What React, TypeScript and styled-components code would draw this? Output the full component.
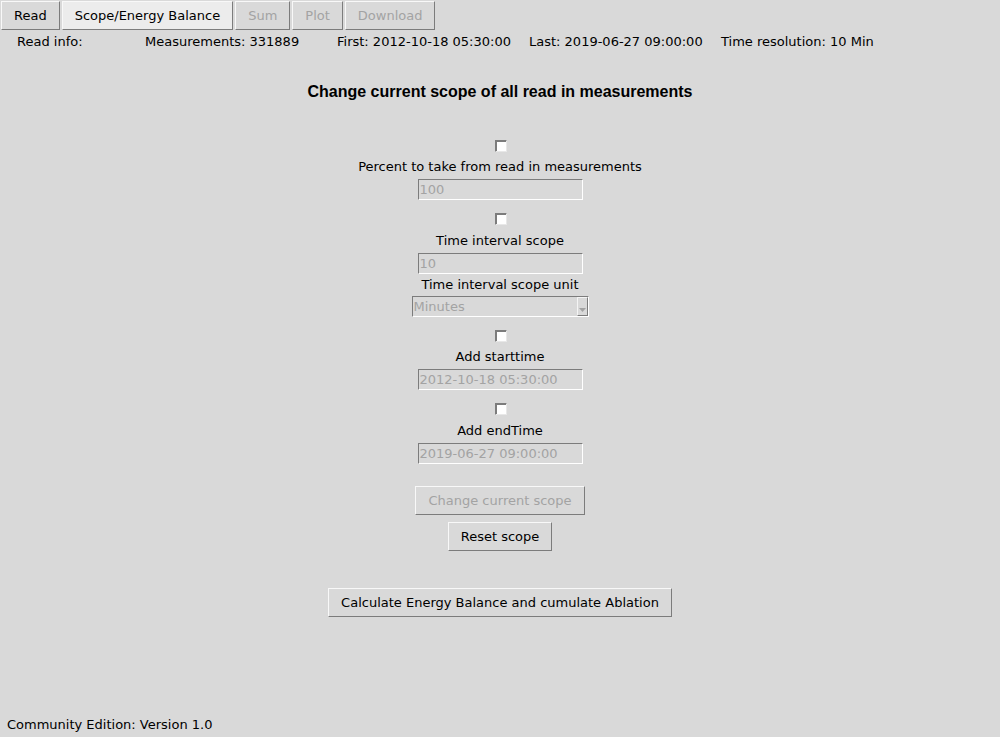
import React from "react";
import styled, { createGlobalStyle } from "styled-components";

const Global = createGlobalStyle`
  html, body { margin: 0; padding: 0; background: #d9d9d9; }
  body { font-family: "DejaVu Sans", sans-serif; font-size: 13px; color: #000; }
`;

const Page = styled.div`
  height: 737px;
  display: flex;
  flex-direction: column;
  background: #d9d9d9;
  overflow: hidden;
`;

const TabBar = styled.div`
  display: flex;
  padding: 1px;
  gap: 2px;
  height: 29px;
`;

const RaisedButton = styled.button<{ $disabled?: boolean; $active?: boolean }>`
  height: 29px;
  padding: 0 12px;
  margin: 0;
  font-family: "DejaVu Sans", sans-serif;
  font-size: 13px;
  line-height: 27px;
  color: ${(p) => (p.$disabled ? "#a3a3a3" : "#000")};
  background: ${(p) => (p.$active ? "#ececec" : "#d9d9d9")};
  border: 1px solid;
  border-color: #f8f8f8 #7c7c7c #7c7c7c #f8f8f8;
  white-space: nowrap;
  cursor: default;
`;

const InfoRow = styled.div`
  display: grid;
  grid-template-columns: 128px 192px 192px 192px auto;
  padding-left: 17px;
  margin-top: 2px;
  line-height: 18px;
  white-space: nowrap;
`;

const Main = styled.div`
  display: flex;
  flex-direction: column;
  align-items: center;
`;

const Title = styled.div`
  margin-top: 31px;
  font-family: "Liberation Sans", Arial, sans-serif;
  font-weight: bold;
  font-size: 16px;
  line-height: 20px;
`;

const Check = styled.span<{ $mt: number }>`
  display: block;
  margin-top: ${(p) => p.$mt}px;
  margin-left: 2px;
  width: 10px;
  height: 10px;
  background: #fff;
  border-style: solid;
  border-width: 1px;
  border-color: #7c7c7c #e8e8e8 #e8e8e8 #7c7c7c;
  box-shadow: inset 1px 1px 0 #7c7c7c;
`;

const Label = styled.div<{ $mt: number }>`
  margin-top: ${(p) => p.$mt}px;
  line-height: 18px;
  white-space: nowrap;
`;

const Entry = styled.div<{ $mt: number }>`
  margin-top: ${(p) => p.$mt}px;
  width: 162px;
  height: 19px;
  border: 1px solid;
  border-color: #7c7c7c #fff #fff #7c7c7c;
  color: #a3a3a3;
  line-height: 19px;
  padding-left: 1px;
  box-sizing: content-box;
  white-space: nowrap;
  overflow: hidden;
`;

const Combo = styled.div<{ $mt: number }>`
  margin-top: ${(p) => p.$mt}px;
  width: 175px;
  height: 19px;
  border: 1px solid;
  border-color: #7c7c7c #fff #fff #7c7c7c;
  display: flex;
  align-items: stretch;
  color: #a3a3a3;
`;

const ComboText = styled.div`
  flex: 1;
  line-height: 19px;
  padding-left: 1px;
`;

const ComboArrow = styled.div`
  width: 11px;
  border: 1px solid;
  border-color: #f4f4f4 #7c7c7c #7c7c7c #f4f4f4;
  display: flex;
  align-items: flex-end;
  justify-content: center;
  padding-bottom: 3px;
  box-sizing: border-box;
`;

const Btn = styled(RaisedButton)<{ $mt: number }>`
  margin-top: ${(p) => p.$mt}px;
`;

const Footer = styled.div`
  margin-top: auto;
  padding: 0 0 3px 7px;
  line-height: 18px;
`;

export default function App() {
  return (
    <Page>
      <Global />
      <TabBar>
        <RaisedButton>Read</RaisedButton>
        <RaisedButton $active>Scope/Energy Balance</RaisedButton>
        <RaisedButton $disabled>Sum</RaisedButton>
        <RaisedButton $disabled>Plot</RaisedButton>
        <RaisedButton $disabled>Download</RaisedButton>
      </TabBar>
      <InfoRow>
        <span>Read info:</span>
        <span>Measurements: 331889</span>
        <span>First: 2012-10-18 05:30:00</span>
        <span>Last: 2019-06-27 09:00:00</span>
        <span>Time resolution: 10 Min</span>
      </InfoRow>
      <Main>
        <Title>Change current scope of all read in measurements</Title>
        <Check $mt={38} />
        <Label $mt={6}>Percent to take from read in measurements</Label>
        <Entry $mt={3}>100</Entry>
        <Check $mt={13} />
        <Label $mt={7}>Time interval scope</Label>
        <Entry $mt={3}>10</Entry>
        <Label $mt={2}>Time interval scope unit</Label>
        <Combo $mt={2}>
          <ComboText>Minutes</ComboText>
          <ComboArrow>
            <svg width="7" height="4" viewBox="0 0 7 4">
              <polygon points="0,0 7,0 3.5,4" fill="#a3a3a3" />
            </svg>
          </ComboArrow>
        </Combo>
        <Check $mt={13} />
        <Label $mt={6}>Add starttime</Label>
        <Entry $mt={3}>2012-10-18 05:30:00</Entry>
        <Check $mt={13} />
        <Label $mt={7}>Add endTime</Label>
        <Entry $mt={3}>2019-06-27 09:00:00</Entry>
        <Btn $mt={22} $disabled>Change current scope</Btn>
        <Btn $mt={7}>Reset scope</Btn>
        <Btn $mt={37}>Calculate Energy Balance and cumulate Ablation</Btn>
      </Main>
      <Footer>Community Edition: Version 1.0</Footer>
    </Page>
  );
}
